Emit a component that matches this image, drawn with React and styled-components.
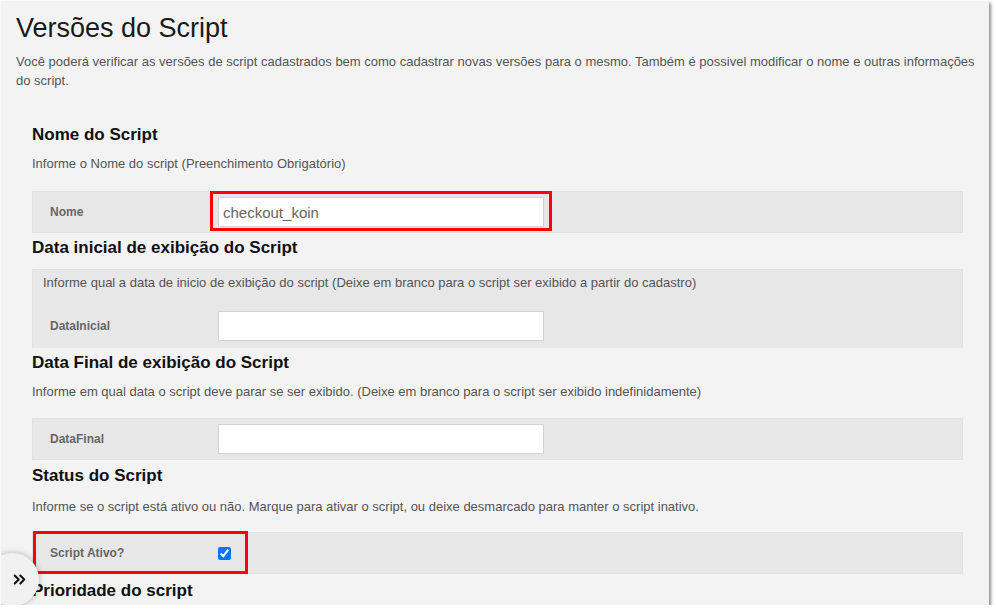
import React from "react";
import styled, { createGlobalStyle } from "styled-components";
import { ChevronsRight } from "lucide-react";

const GlobalStyle = createGlobalStyle`
  html, body {
    margin: 0;
    padding: 0;
    background: #ffffff;
  }
  body {
    font-family: "Liberation Sans", Arial, sans-serif;
  }
`;

const Frame = styled.div`
  position: relative;
  margin: 1px 0 0 1px;
  width: 988px;
  height: 604px;
  background: #f3f3f3;
  box-shadow: 2px 2px 3px rgba(0, 0, 0, 0.45);
  overflow: hidden;
`;

const Header = styled.div`
  padding: 11px 12px 0 15px;
`;

const Title = styled.h1`
  margin: 0;
  font-size: 27px;
  line-height: 32px;
  font-weight: 400;
  color: #1a1a1a;
`;

const Intro = styled.p`
  margin: 8px 0 0;
  font-size: 13px;
  line-height: 19px;
  color: #555;
`;

const Body = styled.div`
  padding: 35px 26px 0 31px;
`;

const Heading = styled.h2`
  margin: ${(p) => p.$top ?? 5}px 0 0;
  font-size: 17px;
  line-height: 20px;
  font-weight: 700;
  color: #111;
`;

const Hint = styled.p`
  margin: ${(p) => p.$top || 10}px 0 0;
  font-size: 13px;
  line-height: 18px;
  color: #555;
`;

const Row = styled.div`
  display: flex;
  align-items: center;
  height: 42px;
  margin-top: ${(p) => p.$top || 0}px;
  padding-left: 17px;
  background: ${(p) => (p.$plain ? "transparent" : "#e7e7e7")};
  border: ${(p) => (p.$plain ? "none" : "1px solid #e2e2e2")};
  box-sizing: border-box;
`;

const Group = styled.div`
  margin-top: 11px;
  padding: 4px 0 1px;
  background: #e7e7e7;
  border: 1px solid #e2e2e2;
  border-bottom: none;
  & > p {
    margin: 0;
    padding-left: 10px;
  }
`;

const Label = styled.span`
  width: 168px;
  flex-shrink: 0;
  font-size: 12px;
  font-weight: 700;
  color: #666;
`;

const Field = styled.input`
  box-sizing: border-box;
  width: 326px;
  height: 30px;
  padding: 0 4px;
  border: 1px solid #d3d3d3;
  background: #fff;
  font-family: "Liberation Sans", Arial, sans-serif;
  font-size: 15px;
  color: #666;
  outline: none;
`;

const Highlight = styled.div`
  position: relative;
  display: flex;
  align-items: center;
  &::after {
    content: "";
    position: absolute;
    top: ${(p) => p.$t}px;
    right: ${(p) => p.$r}px;
    bottom: ${(p) => p.$b}px;
    left: ${(p) => p.$l}px;
    border: 3px solid #ff0000;
    pointer-events: none;
  }
`;

const Check = styled.input`
  margin: 0;
  width: 13px;
  height: 13px;
  accent-color: #0075ff;
`;

const StatusRow = styled.div`
  margin-top: 16px;
  height: 42px;
  background: #e7e7e7;
  border: 1px solid #e2e2e2;
  box-sizing: border-box;
  display: flex;
  align-items: center;
`;

const Toggle = styled.button`
  position: absolute;
  left: -15px;
  bottom: -1px;
  width: 53px;
  height: 53px;
  border-radius: 50%;
  border: none;
  background: #f1f1f1;
  box-shadow: 0 0 6px rgba(0, 0, 0, 0.28);
  display: flex;
  align-items: center;
  justify-content: center;
  padding: 0 0 0 14px;
  color: #111;
`;

export default function App() {
  return (
    <>
      <GlobalStyle />
      <Frame>
        <Header>
          <Title>Versões do Script</Title>
          <Intro>
            Você poderá verificar as versões de script cadastrados bem como cadastrar novas versões para o
            mesmo. Também é possivel modificar o nome e outras informações do script.
          </Intro>
        </Header>
        <Body>
          <Heading $top={0}>Nome do Script</Heading>
          <Hint>Informe o Nome do script (Preenchimento Obrigatório)</Hint>
          <Row $top={18}>
            <Label>Nome</Label>
            <Highlight $t={-6} $r={-8} $b={-4} $l={-8}>
              <Field defaultValue="checkout_koin" />
            </Highlight>
          </Row>

          <Heading>Data inicial de exibição do Script</Heading>
          <Group>
            <Hint>
              Informe qual a data de inicio de exibição do script (Deixe em branco para o script ser exibido a
              partir do cadastro)
            </Hint>
            <Row $top={13} $plain>
              <Label>DataInicial</Label>
              <Field />
            </Row>
          </Group>

          <Heading>Data Final de exibição do Script</Heading>
          <Hint>
            Informe em qual data o script deve parar se ser exibido. (Deixe em branco para o script ser exibido
            indefinidamente)
          </Hint>
          <Row $top={17}>
            <Label>DataFinal</Label>
            <Field />
          </Row>

          <Heading $top={6}>Status do Script</Heading>
          <Hint $top={12}>
            Informe se o script está ativo ou não. Marque para ativar o script, ou deixe desmarcado para manter o
            script inativo.
          </Hint>
          <StatusRow>
            <Highlight $t={-3} $r={-17} $b={-2} $l={0}>
              <Row $plain style={{ height: 38 }}>
                <Label>Script Ativo?</Label>
                <Check type="checkbox" defaultChecked />
              </Row>
            </Highlight>
          </StatusRow>

          <Heading $top={7}>Prioridade do script</Heading>
        </Body>
        <Toggle aria-label="expandir">
          <ChevronsRight size={19} strokeWidth={2.6} />
        </Toggle>
      </Frame>
    </>
  );
}
